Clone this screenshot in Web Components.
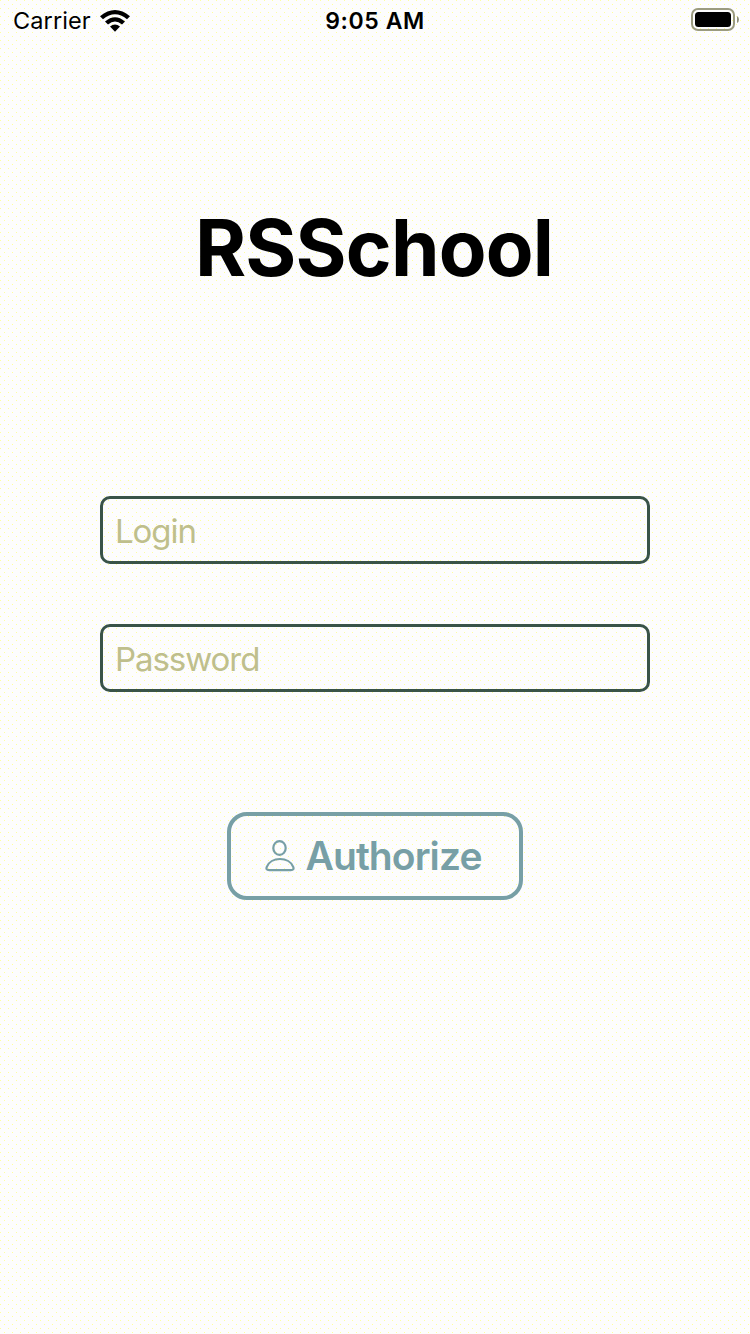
<!DOCTYPE html>
<html lang="en"><head><meta charset="utf-8"><title>RSSchool</title>
<style>html,body{margin:0;height:100%;overflow:hidden}</style></head><body>
<login-screen></login-screen>
<script>
const define=(name,html)=>customElements.define(name,class extends HTMLElement{
  constructor(){super();this.attachShadow({mode:"open"}).innerHTML=html;}
});
define("status-bar",`<style>
:host{display:grid;grid-template-columns:1fr auto 1fr;align-items:center;height:40px;box-sizing:border-box;padding:0 11px 0 13px;font-size:24px;line-height:40px}
.left{display:flex;align-items:center;gap:9px}
.carrier{font-size:23.5px;letter-spacing:.1px;padding-top:1px}
.time{font-weight:600;font-size:23px;letter-spacing:.6px;padding-top:1px;margin-right:2px}
.battery{justify-self:end;margin-bottom:2px}svg{display:block}
</style><div class="left"><span class="carrier">Carrier</span>
<svg width="30" height="22" viewBox="0 0 30 22"><path d="M0 6.2Q15-6 30 6.2L27 9.3Q15-.8 3 9.3ZM5 11.5Q15 3 25 11.5L22 14.5Q15 8.5 8 14.5ZM10 16.6Q15 12.4 20 16.6L15 21.8Z"/></svg></div>
<span class="time">9:05 AM</span>
<svg class="battery" width="48" height="23" viewBox="0 0 48 23"><rect x="1" y="1" width="42" height="21" rx="6" fill="none" stroke="#9b9b80" stroke-width="2"/><rect x="4" y="4" width="36" height="15" rx="3.5"/><path d="M46 8Q48 9 48 11.5T46 15Z" fill="#8f8f78"/></svg>`);
define("app-title",`<style>:host{display:block;text-align:center;font-weight:700;font-size:78px;line-height:96px;letter-spacing:-.8px;padding-right:2px}</style><slot></slot>`);
define("text-field",`<style>:host{display:flex;align-items:center;box-sizing:border-box;height:68px;border:3px solid #395348;border-radius:10px;padding:1px 12px 0;color:#bfbf8c;font-size:33px;letter-spacing:-1.05px}</style><slot></slot>`);
define("action-button",`<style>:host{display:flex;align-items:center;justify-content:center;gap:10px;box-sizing:border-box;width:296px;height:88px;border:4px solid #779fa6;border-radius:20px;padding-right:3px;color:#779fa6;font-weight:600;font-size:39px;letter-spacing:-.9px}svg{display:block}span{margin-top:-2px}</style>
<svg width="30" height="32" viewBox="0 0 30 32" fill="none" stroke="currentColor" stroke-width="2.2"><ellipse cx="14.5" cy="8" rx="6.2" ry="6.9"/><path d="M4.2 30.2H25.8C28.5 30.2 29 28.8 28.2 26.8C26.3 22 21 19 15 19S3.700 22 1.800 26.800C1 28.800 1.500 30.200 4.200 30.200Z"/></svg><span><slot></slot></span>`);
define("login-screen",`<style>
:host{display:flex;flex-direction:column;box-sizing:border-box;height:1334px;font-family:Inter,"Liberation Sans",sans-serif;color:#000;background:conic-gradient(at 1px 1px,transparent 75%,#ffff9c 0) 0 0/8px 8px,conic-gradient(at 1px 1px,transparent 75%,#ffff9c 0) 4px 4px/8px 8px,#fdfdfd}
app-title{margin-top:160px}
form{display:flex;flex-direction:column;gap:60px;margin:200px 100px 0}
action-button{align-self:center;margin-top:60px}
</style><status-bar></status-bar><app-title>RSSchool</app-title>
<form><text-field>Login</text-field><text-field>Password</text-field><action-button>Authorize</action-button></form>`);
</script></body></html>
